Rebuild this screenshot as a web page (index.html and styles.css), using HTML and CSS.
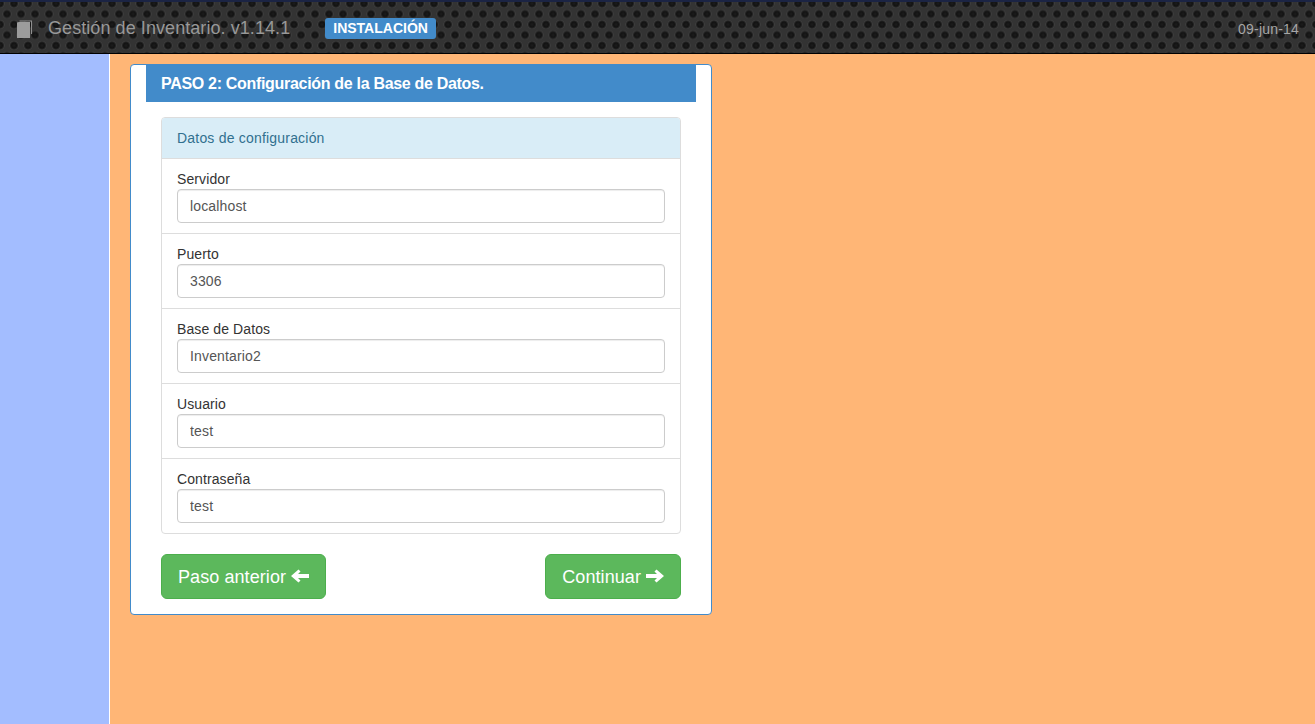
FILE: index.html
```html
<!DOCTYPE html>
<html lang="es">
<head>
    <meta charset="UTF-8">
    <meta name="viewport" content="width=device-width, initial-scale=1.0">
    <title>Gestión de Inventario</title>
    <link rel="stylesheet" href="styles.css">
</head>
<body>
    <header class="topbar">
        <div class="brand">
            <svg class="brand-icon" viewBox="0 0 17 18" aria-hidden="true">
                <path d="M3.5 0.5H16V14H15V1.5H3.5z" fill="#8f8f8f"/>
                <path d="M1 2.5 3 2H14V18H1z" fill="#9c9c9c"/>
            </svg>
            <span class="brand-name">Gestión de Inventario. v1.14.1</span>
            <span class="label">INSTALACIÓN</span>
        </div>
        <span class="date">09-jun-14</span>
    </header>
    <div class="layout">
        <aside class="sidebar"></aside>
        <main class="content">
            <section class="box">
                <h1 class="box-title">PASO 2: Configuración de la Base de Datos.</h1>
                <div class="box-body">
                    <div class="panel">
                        <div class="panel-heading">Datos de configuración</div>
                        <div class="field">
                            <label for="server">Servidor</label>
                            <input id="server" type="text" value="localhost">
                        </div>
                        <div class="field">
                            <label for="port">Puerto</label>
                            <input id="port" type="text" value="3306">
                        </div>
                        <div class="field">
                            <label for="database">Base de Datos</label>
                            <input id="database" type="text" value="Inventario2">
                        </div>
                        <div class="field">
                            <label for="user">Usuario</label>
                            <input id="user" type="text" value="test">
                        </div>
                        <div class="field">
                            <label for="password">Contraseña</label>
                            <input id="password" type="text" value="test">
                        </div>
                    </div>
                    <div class="actions">
                        <button class="btn" type="button"><span>Paso anterior</span><svg class="arrow" viewBox="0 0 18 14" aria-hidden="true"><path d="M0 7 7.5 0.5 9.5 2.5 7 5H18V9H7L9.5 11.5 7.5 13.5z"/></svg></button>
                        <button class="btn" type="button"><span>Continuar</span><svg class="arrow" viewBox="0 0 18 14" aria-hidden="true"><path d="M18 7 10.5 0.5 8.5 2.5 11 5H0V9H11L8.5 11.5 10.5 13.5z"/></svg></button>
                    </div>
                </div>
            </section>
        </main>
    </div>
</body>
</html>
```

FILE: styles.css
```css
* {
    box-sizing: border-box;
}

html, body {
    height: 100%;
}

body {
    margin: 0;
    font-family: "Liberation Sans", Arial, sans-serif;
    font-size: 14px;
    color: #333;
    background-color: #ffb676;
    overflow: hidden;
}

.topbar {
    height: 54px;
    display: flex;
    justify-content: space-between;
    align-items: center;
    padding: 2px 16px 0 16px;
    border-top: 2px solid #1b2444;
    border-bottom: 1px solid #000;
    background-color: #333;
    background-image:
        radial-gradient(circle at center, #1c1c1c 0, #131313 2.5px, #222 3.5px, #3c3c3c 4.5px, transparent 5px),
        radial-gradient(circle at center, #1c1c1c 0, #131313 2.5px, #222 3.5px, #3c3c3c 4.5px, transparent 5px);
    background-size: 14px 21px;
    background-position: 0 1.5px, 7px 12px;
}

.brand {
    display: flex;
    align-items: center;
}

.brand-icon {
    width: 17px;
    height: 18px;
    margin-right: 15px;
}

.brand-name {
    font-size: 18px;
    letter-spacing: 0.07px;
    color: #989898;
}

.label {
    margin-left: 35px;
    padding: 2px 8px 3px;
    border-radius: 3px;
    background-color: #428bca;
    color: #fff;
    font-size: 14px;
    font-weight: bold;
    line-height: 16px;
}

.date {
    color: #a6a6a6;
    font-size: 14px;
    letter-spacing: 0.2px;
}

.layout {
    display: flex;
    height: 670px;
}

.sidebar {
    width: 110px;
    flex-shrink: 0;
    background-color: #a3bdff;
    border-right: 1px solid #fff;
}

.content {
    flex: 1;
    padding: 10px 20px;
}

.box {
    width: 582px;
    height: 551px;
    background-color: #fff;
    border: 1px solid #428bca;
    border-radius: 4px;
}

.box-title {
    margin: -1px 15px 0;
    height: 38px;
    padding: 1px 0 0 15px;
    background-color: #428bca;
    color: #fff;
    font-size: 16px;
    font-weight: bold;
    letter-spacing: -0.31px;
    line-height: 38px;
}

.box-body {
    padding: 15px 30px;
}

.panel {
    border: 1px solid #ddd;
    border-radius: 4px;
    background-color: #fff;
}

.panel-heading {
    height: 40px;
    padding: 0 15px;
    background-color: #d9edf7;
    color: #31708f;
    letter-spacing: 0.2px;
    line-height: 40px;
    border-radius: 3px 3px 0 0;
}

.field {
    height: 75px;
    padding: 11px 15px 0;
    border-top: 1px solid #ddd;
}

.field label {
    display: block;
    height: 19px;
    letter-spacing: 0.1px;
    line-height: 18px;
}

.field input {
    display: block;
    width: 100%;
    height: 34px;
    padding: 6px 12px;
    border: 1px solid #ccc;
    border-radius: 4px;
    box-shadow: inset 0 1px 1px rgba(0, 0, 0, 0.075);
    color: #555;
    font-family: inherit;
    font-size: 14px;
    letter-spacing: 0.15px;
}

.actions {
    display: flex;
    justify-content: space-between;
    margin-top: 20px;
}

.btn {
    display: flex;
    align-items: center;
    height: 45px;
    padding: 1px 16px 0;
    border: 1px solid #4cae4c;
    border-radius: 6px;
    background-color: #5cb85c;
    color: #fff;
    font-family: inherit;
    font-size: 18px;
    letter-spacing: 0.08px;
}

.arrow {
    width: 18px;
    height: 14px;
    margin: -2px 0 0 5px;
    fill: #fff;
}
```
